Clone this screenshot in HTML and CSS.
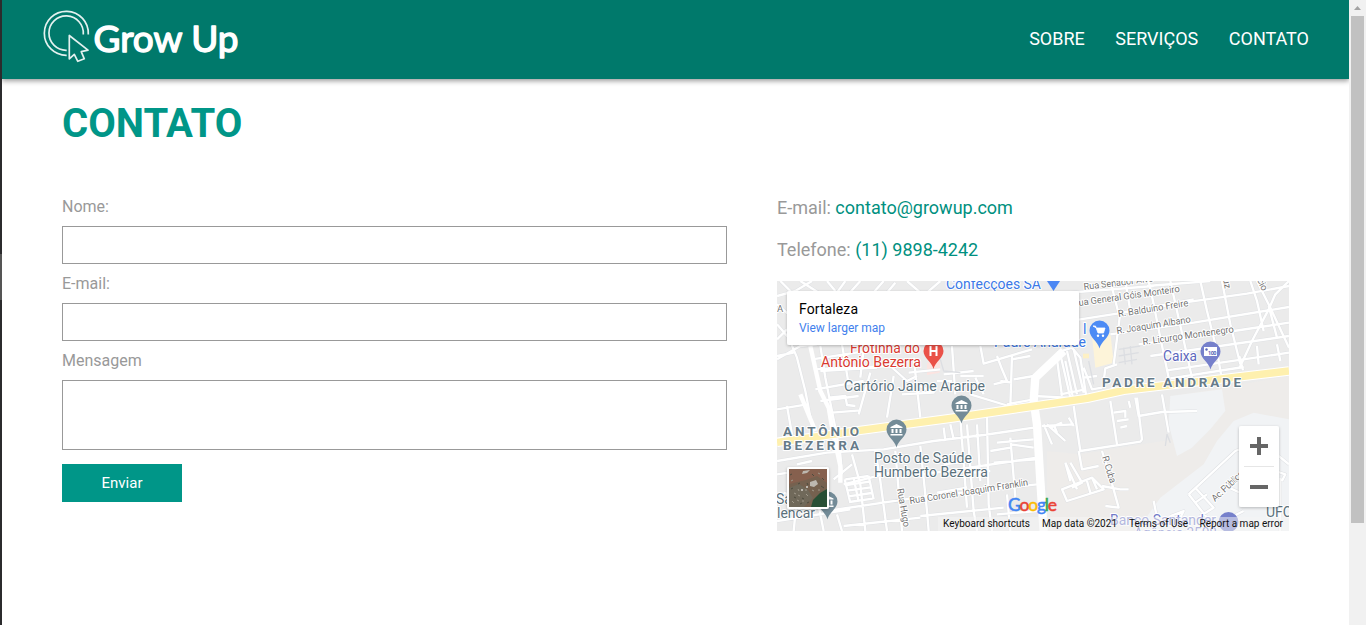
FILE: index.html
```html
<!DOCTYPE html>
<html lang="pt-BR">
<head>
<meta charset="utf-8">
<title>Grow Up - Contato</title>
<link rel="stylesheet" href="styles.css">
</head>
<body>
<div class="edge"><div class="edge-mark"></div></div>
<div class="page">
  <header class="header">
    <svg class="logo" viewBox="42 8 200 58" role="img" aria-label="Grow Up">
      <g fill="none" stroke="#e3f1ef" stroke-width="1.700">
        <path d="M66.700 55.300A22 22 0 1 1 88.300 34.500"/>
        <path d="M66.700 50.300A17.200 17.200 0 1 1 83.300 34.500"/>
        <path d="M69.300 35.500V58.800L74.300 54.300L77.800 61.300L84.300 58.800L81.200 51.700L88 50.200Z" stroke-linejoin="round"/>
      </g>
      <text class="logo-text" x="93.500" y="51.500" textLength="145" lengthAdjust="spacingAndGlyphs">Grow Up</text>
    </svg>
    <nav class="nav"><a>SOBRE</a><a>SERVIÇOS</a><a>CONTATO</a></nav>
  </header>
  <main class="main">
    <h1 class="title">CONTATO</h1>
    <div class="columns">
      <form class="form">
        <label class="label" for="nome">Nome:</label>
        <input class="field" id="nome" type="text">
        <label class="label" for="email">E-mail:</label>
        <input class="field" id="email" type="text">
        <label class="label" for="msg">Mensagem</label>
        <textarea class="field area" id="msg"></textarea>
        <button class="send" type="button">Enviar</button>
      </form>
      <section class="info">
        <p class="line">E-mail: <a>contato@growup.com</a></p>
        <p class="line">Telefone: <a>(11) 9898-4242</a></p>
        <div class="map">
          <svg class="map-svg" viewBox="777 281 512 250">
            <defs>
              <path id="pin" d="M0 18C-1.500 11-10 7-10 0A10 10 0 0 1 10 0C10 7 1.500 11 0 18Z"/>
              <path id="bank" fill="#fff" d="M0-6L6-3V-2H-6V-3ZM-5-1H-3V3H-5ZM-1-1H1V3H-1ZM3-1H5V3H3ZM-6 4H6V5.500H-6Z"/>
              <filter id="soft" x="-10%" y="-10%" width="120%" height="130%"><feDropShadow dx="0" dy="1" stdDeviation="1.500" flood-opacity=".25"/></filter>
              <g id="streets">
                <path d="M905 116L1020 98L1240 62L1410 38L1536 15M1020 98L1250 55M880 35L1130 15M1000 160L1250 125L1536 78M1085 190L1370 150L1536 125M1120 225L1536 165M1170 268L1420 232L1536 215M1180 292L1400 258M1110 15L1300 0"/>
                <path d="M1000 0L1028 110L1010 250M1045 0L1060 90M1115 0L1130 70L1150 170L1175 290M1180 0L1200 90L1225 200L1245 290M1270 0L1290 90L1320 210L1332 280M1335 0L1360 130L1390 250M1420 0L1440 60L1460 150M1440 0L1480 80L1536 200M1475 75L1500 170M1536 0L1495 40L1475 85L1425 180L1387 262M1387 225L1398 268M1440 195L1445 250M1500 190L1510 240M980 300L985 262L1020 250"/>
                <path d="M10 0L55 45M70 0L125 35M150 0L175 30M205 0L180 35M250 0L205 50M320 0L285 40M355 5L330 35M390 0L430 35M490 0L450 35M530 15L610 0M0 45L55 30L105 0M0 130L35 170L60 230L85 330L110 460M0 70L35 100M0 175L30 145M0 235L70 195L120 190M0 225L50 215"/>
                <path d="M130 195L145 290L175 440L190 520L195 580M105 235L300 205M110 265L340 255L390 300L420 285M130 270L300 260M115 325L260 300M0 385L90 370M130 360L245 345M165 395L250 388M280 275L245 400M350 285L330 410M410 230L430 410M375 340L470 335L430 315M195 190L215 310M260 205L250 290M30 375L45 460M155 350L205 345L210 372L235 375M395 275L490 265M500 280L590 270"/>
                <path d="M525 195L535 340M610 195L620 248L765 205M610 165L615 190M660 225L675 265L690 300L650 310M705 225L700 375M705 235L760 225M670 300L705 305M710 295L770 285M580 340L695 375M690 370L770 355M480 300L525 300M550 285L620 285M595 290L620 340M770 345L870 350"/>
                <path d="M840 215L885 200L910 230L930 360M850 220L880 350M838 220L855 345M870 210L900 340M890 205L920 335M850 340L925 325M920 260L945 325L975 320M920 290L960 285M865 240L888 350"/>
                <path d="M0 540L150 515L320 505L470 480L620 462L770 440M60 550L105 540M225 520L250 610L265 750M170 595L225 550M295 510L310 600L330 750M355 510L375 750M430 495L450 690L455 750M550 410L555 480L570 680M570 430L590 690L600 750M600 430L610 600M630 405L635 670L645 750M500 440L505 480M520 430L530 475M0 580L100 565M100 560L120 650L140 750M150 690L420 650L780 610M200 610L380 565M440 580L780 530M0 720L220 685M200 735L430 710M500 550L580 540M480 635L570 620M590 575L640 570M640 510L700 500M700 470L715 650M650 545L780 535M660 485L770 475M700 490L770 500M430 705L680 680M690 640L700 750M660 700L780 690M20 635L60 650L50 750M180 700L195 750M120 580L150 560"/>
                <path d="M205 595L275 585M208 612L278 602M211 629L281 619M214 646L284 636M217 663L287 653M203 595L220 665M230 592L245 662M275 585L290 655"/>
                <path d="M795 435L890 430M890 375L910 510L1090 482L1095 475L1080 350M905 510L915 565L965 555M800 430L825 490M810 430L865 480M830 430L840 455M820 440L855 425M875 410L890 435M1000 360L1020 490M1010 395L1045 390L1045 410M1020 420L1055 415M1030 440L1050 435M1075 350L1085 405L1155 393L1260 390M1155 340L1175 455M1055 360L1060 380"/>
                <path d="M855 625L945 590L980 625L870 660ZM865 545L900 625M880 545L915 605L885 620M945 590L960 625M975 615L1030 625H1055M975 510L1000 590L1025 680L985 675M865 545L880 600M930 600L940 635"/>
                <path d="M1235 640L1375 510L1400 500M1235 640L1290 710L1255 735M1255 620L1310 680L1270 705M1255 665L1290 640M1345 615L1400 640M1505 525L1536 550M1510 590V750M1495 570L1525 580L1515 600M1400 690L1330 725L1260 750M1130 660L1140 710M1180 705L1220 690L1200 730"/>
              </g>
            </defs>
            <rect x="777" y="281" width="512" height="250" fill="#ebebeb"/>
            <g transform="translate(777 281) scale(.33333)">
              <path d="M1190 345L1536 285V750H810V510L910 520L1190 475Z" fill="#eeecea"/>
              <path d="M1180 345L1335 325L1345 390L1300 445L1245 500L1200 525L1175 430Z" fill="#f1f3f5"/>
              <path d="M1536 415L1430 395L1370 420L1320 480L1280 550L1150 650L1080 750H1536Z" fill="#f1f3f5"/>
              <path d="M945 165L1000 155L1010 245L955 260Z" fill="#fdf4d9"/>
              <path d="M918 218H936V232H918Z" fill="#fdf0c4"/>
              <path d="M450 245L490 240L488 275L450 282Z" fill="#fce4e1"/>
              <use href="#streets" class="road-edge"/>
              <use href="#streets" class="road"/>
              <g class="minor">
                <path d="M1025 205L1090 195M1025 225L1085 215M1025 245L1080 235M1040 200L1045 250M1060 195L1065 250M490 235L500 270L550 275M1165 495L1170 460L1180 485M935 240L950 310"/>
              </g>
              <path class="avenue-side" d="M100 195L130 330L155 380L165 440L190 555L190 605M70 340L115 450"/>
              <path class="avenue" d="M860 210L775 290L770 360L780 430L790 600L800 750"/>
              <path class="highway-edge" d="M0 484L250 448L520 412L930 352L1040 328L1536 270"/>
              <path class="highway" d="M0 484L250 448L520 412L930 352L1040 328L1536 270"/>
            </g>

            <g fill="#738b97"><use href="#pin" x="961.500" y="405.500"/><use href="#pin" x="896.500" y="429.500"/><use href="#pin" x="827.500" y="501.500"/></g>
            <use href="#bank" x="961.500" y="406"/><use href="#bank" x="896.500" y="430"/><use href="#bank" x="827.500" y="501.500"/>
            <use href="#pin" x="933.500" y="351" fill="#ea5148"/>
            <path d="M930.500 346V356M936.500 346V356M930 351H937" stroke="#fff" stroke-width="2"/>
            <use href="#pin" x="1099.500" y="330.500" fill="#4c8bf5"/>
            <path d="M1093 326H1095.500L1098 333H1103.500L1105 328H1096.500Z" fill="#fff" stroke="#fff" stroke-width=".8"/><circle cx="1098" cy="335.700" r="1.200" fill="#fff"/><circle cx="1103" cy="335.700" r="1.200" fill="#fff"/>
            <path d="M1047 281H1060L1053.500 291Z" fill="#4c87f3"/>
            <use href="#pin" x="1210.500" y="351.500" fill="#7680cb"/>
            <rect x="1204" y="347" width="13" height="9" fill="#fff"/><text class="bill" x="1208" y="354.500" textLength="8.500">100</text><circle cx="1206.500" cy="349.500" r="1.200" fill="#5964b8"/>
            <circle cx="1228.500" cy="522" r="10" fill="#7680cb"/>

            <g class="halo place">
              <g fill="#3b78e7"><text x="946" y="289" textLength="95" lengthAdjust="spacingAndGlyphs">Confecções SA</text><text x="994" y="347" textLength="92" lengthAdjust="spacingAndGlyphs">Padre Andrade</text><text x="1083" y="334">l</text></g>
              <g fill="#d93a31"><text x="850" y="353" textLength="70" lengthAdjust="spacingAndGlyphs">Frotinha do</text><text x="821" y="367" textLength="100" lengthAdjust="spacingAndGlyphs">Antônio Bezerra</text></g>
              <g fill="#5b717c">
                <text x="844" y="391" textLength="141" lengthAdjust="spacingAndGlyphs">Cartório Jaime Araripe</text>
                <text x="874" y="463" textLength="98" lengthAdjust="spacingAndGlyphs">Posto de Saúde</text><text x="874" y="477" textLength="114" lengthAdjust="spacingAndGlyphs">Humberto Bezerra</text>
                <text x="776" y="504">Sa</text><text x="777" y="518" textLength="38" lengthAdjust="spacingAndGlyphs">lencar</text><text x="1266" y="517" textLength="26" lengthAdjust="spacingAndGlyphs">UFC</text>
              </g>
              <text x="1163" y="361" textLength="34" lengthAdjust="spacingAndGlyphs" fill="#5d68bd">Caixa</text>
              <g fill="#7179c8"><text x="1110" y="525" textLength="106" lengthAdjust="spacingAndGlyphs">Banco Santander</text><text x="1134" y="538" textLength="83" lengthAdjust="spacingAndGlyphs">Agência 3508</text></g>
            </g>
            <g class="halo district"><text x="1102" y="387" textLength="139">PADRE ANDRADE</text><text x="783" y="436" textLength="76">ANTÔNIO</text><text x="783" y="450" textLength="76">BEZERRA</text></g>
            <g class="halo street">
              <text transform="translate(1084 290) rotate(-7)" textLength="70">Rua Senador Alve</text>
              <text transform="translate(1079 306) rotate(-8)" textLength="102">ua General Góis Monteiro</text>
              <text transform="translate(1118.500 317) rotate(-9)" textLength="71">R. Balduíno Freire</text>
              <text transform="translate(1117 334) rotate(-9)" textLength="75">R. Joaquim Albano</text>
              <text transform="translate(1143 345) rotate(-8)" textLength="92">R. Licurgo Montenegro</text>
              <text transform="translate(910 504) rotate(-9)" textLength="120">Rua Coronel Joaquim Franklin</text>
              <text transform="translate(897 489) rotate(80)" textLength="39">Rua Hugo</text>
              <text transform="translate(1102 457) rotate(73)" textLength="28">R. Cuba</text>
              <text transform="translate(1215 502) rotate(-43)" textLength="40">Ac. Pública</text>
              <text transform="translate(1223 279) rotate(80)">uz</text>
              <text transform="translate(1257 280) rotate(65)">cio</text>
              <text x="777" y="312">A</text>
            </g>

            <rect x="787" y="291" width="292" height="54" rx="2" fill="#fff" filter="url(#soft)"/>
            <text class="card-name" x="799" y="314" textLength="59">Fortaleza</text>
            <text class="card-link" x="799" y="332" textLength="86">View larger map</text>

            <rect x="787" y="467" width="42" height="42" rx="2" fill="#fff" filter="url(#soft)"/>
            <g>
              <rect x="789" y="469" width="38" height="38" fill="#75614f"/>
              <path d="M789 469H827V483L817 476L806 480L789 484Z" fill="#86604e"/>
              <path d="M827 489V507H811L813 500L820 493Z" fill="#284f35"/>
              <path d="M789 488L799 484L808 490L813 498L804 507H789Z" fill="#70695a"/>
              <path d="M803 471L810 470L807 473L802 474ZM810 482L816 480L818 484L814 487L810 486ZM801 489H803V491H801ZM806 486H808V488H806Z" fill="#bdb8b0"/>
              <path d="M791 481L793 480M794 493L796 494M798 495L800 496M806 494L808 496M818 473L820 474M797 500L799 501M802 501L804 501M818 490L820 490M792 501L794 503M805 490L807 490M798 489L799 491M812 490L814 491" stroke="#a0998b"/>
              <path d="M790 475L792 474M798 484L800 483M791 489L793 488M802 498L804 499M812 474L814 476M807 503L809 502M794 497L796 498M800 504L802 503M822 478L824 480M807 483L808 485M821 486L824 488" stroke="#4c4b3e"/>
            </g>

            <rect x="1239" y="426" width="40" height="81" rx="2" fill="#fff" filter="url(#soft)"/>
            <path d="M1250 446H1268M1259 437V455M1250 487H1268" stroke="#666" stroke-width="4"/>
            <path d="M1244 466.500H1274" stroke="#e6e6e6"/>

            <text class="google" x="1008" y="511" textLength="49"><tspan fill="#4285f4" stroke="#4285f4">G</tspan><tspan fill="#ea4335" stroke="#ea4335">o</tspan><tspan fill="#fbbc05" stroke="#fbbc05">o</tspan><tspan fill="#4285f4" stroke="#4285f4">g</tspan><tspan fill="#34a853" stroke="#34a853">l</tspan><tspan fill="#ea4335" stroke="#ea4335">e</tspan></text>
            <path d="M938 517H1289V531H938Z" fill="#f5f5f5" opacity=".5"/>
            <g class="credits"><text x="943" y="527" textLength="87">Keyboard shortcuts</text><text x="1042" y="527" textLength="75">Map data ©2021</text><text x="1129" y="527" textLength="59">Terms of Use</text><text x="1199.500" y="527" textLength="83.500">Report a map error</text></g>
          </svg>
        </div>
      </section>
    </div>
  </main>
</div>
<div class="scrollbar"><svg class="arrow" viewBox="0 0 17 16"><path d="M5 10L8.500 6L12 10Z" fill="#a3a3a3"/></svg><div class="thumb"></div></div>
</body>
</html>
```

FILE: styles.css
```css
* { box-sizing: border-box; }
body {
  margin: 0;
  height: 625px;
  display: flex;
  overflow: hidden;
  background: #fff;
  font-family: Roboto, "Liberation Sans", sans-serif;
}
.edge { width: 2px; background: #2b2b2d; padding-top: 254px; }
.edge-mark { height: 46px; background: #555; }
.page { width: 1347px; overflow: hidden; }
.header {
  height: 79px;
  background: #00796b;
  box-shadow: 0 2px 5px rgba(0, 0, 0, .4);
  display: flex;
  justify-content: space-between;
  padding: 8px 40px 0;
}
.logo { width: 200px; height: 58px; }
.logo-text {
  font-family: Lato, sans-serif;
  font-size: 37px;
  font-weight: 400;
  fill: #fff;
  stroke: #fff;
  stroke-width: 1.4;
  stroke-linejoin: round;
}
.nav { display: flex; gap: 30.5px; padding-top: 20px; font-size: 18px; line-height: 21px; color: #fff; }
.main { padding: 21px 60px 0; }
.title { margin: 0; font-size: 40px; line-height: 48px; font-weight: 700; color: #009688; }
.columns { display: grid; grid-template-columns: 665px 512px; gap: 50px; margin-top: 49px; }
.form { display: flex; flex-direction: column; align-items: flex-start; }
.label { font-size: 16px; line-height: 19px; color: #999; margin-bottom: 10px; }
.field {
  width: 665px;
  height: 38px;
  margin: 0 0 10px;
  border: 1px solid #999;
  border-radius: 0;
  background: #fff;
  padding: 8px;
  font: inherit;
  resize: none;
}
.area { height: 70px; margin-bottom: 14px; }
.send { width: 120px; height: 38px; border: 0; padding: 0; background: #009688; color: #fff; font-family: inherit; font-size: 15px; }
.line { margin: 0 0 21px; font-size: 18px; line-height: 21px; color: #999; }
.line a { color: #009080; }
.map { width: 512px; height: 250px; }
.map-svg { display: block; width: 512px; height: 250px; }
.road, .road-edge, .minor, .avenue, .avenue-side, .highway, .highway-edge { fill: none; stroke-linejoin: round; }
.road { stroke: #fff; stroke-width: 7; }
.road-edge { stroke: #dfe1e4; stroke-width: 10; }
.minor { stroke: #dcdee2; stroke-width: 4; }
.avenue { stroke: #fff; stroke-width: 25; }
.avenue-side { stroke: #fff; stroke-width: 13; }
.highway { stroke: #fef0ae; stroke-width: 22; }
.highway-edge { stroke: #fff; stroke-width: 28; }
.halo { paint-order: stroke; stroke: #fff; stroke-width: 2; stroke-linejoin: round; }
.place { font-size: 14px; }
.district { font-size: 13.5px; font-weight: 700; fill: #667b89; }
.street { font-size: 9.5px; fill: #747474; }
.bill { font-size: 5.5px; font-weight: 700; fill: #5964b8; }
.card-name { font-size: 14px; fill: #000; }
.card-link { font-size: 12px; fill: #427fed; }
.google { font-family: Lato, sans-serif; font-size: 17.5px; font-weight: 400; stroke-width: .5; }
.credits { font-size: 10px; fill: #111; }
.scrollbar { width: 17px; background: #f1f1f1; }
.arrow { display: block; width: 17px; height: 16px; }
.thumb { width: 13px; height: 507px; margin-left: 2px; background: #c1c1c1; }
```
